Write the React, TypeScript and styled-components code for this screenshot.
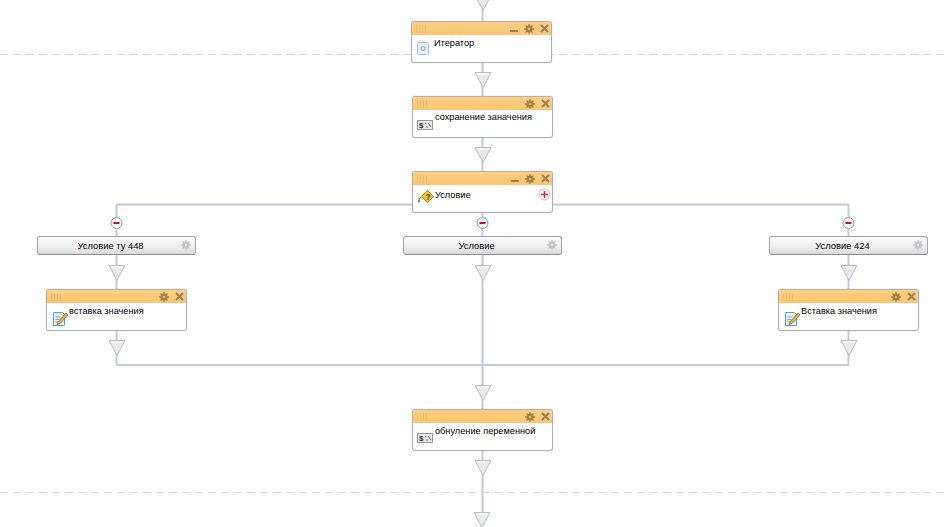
import React from "react";
import styled, { createGlobalStyle } from "styled-components";

const Global = createGlobalStyle`
  html, body { margin: 0; padding: 0; background: #fff; }
  body { font-family: "Liberation Sans", Arial, sans-serif; overflow: hidden; }
`;

const Canvas = styled.div`
  position: relative;
  width: 946px;
  height: 527px;
  overflow: hidden;
  background: #fff;
`;

const Wires = styled.svg`
  position: absolute;
  left: 0;
  top: 0;
`;

const Card = styled.div<{ $x: number; $y: number }>`
  position: absolute;
  left: ${(p) => p.$x}px;
  top: ${(p) => p.$y}px;
  width: 141px;
  height: 42px;
  box-sizing: border-box;
  border: 1px solid #adb1b5;
  border-radius: 3px;
  background: #fff;
  box-shadow: 0 0 1px #b4b7ba;
  display: flex;
  flex-direction: column;
  overflow: hidden;
`;

const CardHeader = styled.div`
  height: 13px;
  flex: none;
  background: linear-gradient(#fccf85, #fdc56c);
  display: flex;
  align-items: center;
  padding: 0 2px 0 4px;
  gap: 6px;
`;

const Grip = styled.div`
  width: 11px;
  height: 8px;
  margin-right: auto;
  background: repeating-linear-gradient(90deg, #ecb970 0 1px, transparent 1px 3px);
`;

const CardBody = styled.div`
  position: relative;
  flex: 1;
  display: flex;
  align-items: flex-start;
  padding-left: 4px;
`;

const IconSlot = styled.div<{ $top: number; $left: number }>`
  width: 18px;
  height: 18px;
  padding: ${(p) => p.$top}px 0 0 ${(p) => p.$left}px;
  box-sizing: border-box;
  flex: none;
  display: flex;
  align-items: flex-start;
  justify-content: flex-start;
`;

const CardLabel = styled.span<{ $top: number }>`
  font-size: 9.2px;
  line-height: 12px;
  margin-top: ${(p) => p.$top}px;
  color: #000;
  white-space: nowrap;
`;

const AddBadge = styled.svg`
  position: absolute;
  right: 1px;
  top: 3px;
`;

const Branch = styled.div<{ $x: number }>`
  position: absolute;
  left: ${(p) => p.$x}px;
  top: 236px;
  width: 159px;
  height: 19px;
  box-sizing: border-box;
  border: 1px solid #a0a4a8;
  border-bottom-color: #888c90;
  border-radius: 3px;
  background: linear-gradient(#fbfbfb, #eeeeee 55%, #d9d9d9);
  display: flex;
  align-items: center;
  justify-content: center;
  padding-right: 12px;
  font-size: 9.4px;
  color: #000;
`;

const BranchGear = styled.span`
  position: absolute;
  right: 4px;
  top: 3px;
  display: flex;
`;

const Gear = ({ color = "#a0834a", size = 10 }: { color?: string; size?: number }) => (
  <svg width={size} height={size} viewBox="0 0 10 10">
    <circle cx="5" cy="5" r="2.300" fill="none" stroke={color} strokeWidth="2.600" />
    <path d="M5 0v2M5 8v2M0 5h2M8 5h2M1.500 1.500l1.400 1.400M7.100 7.100l1.400 1.400M1.500 8.500l1.400-1.400M7.100 2.900l1.400-1.400" stroke={color} strokeWidth="1.300" />
  </svg>
);

const Minimize = () => (
  <svg width="8" height="9" viewBox="0 0 8 9">
    <rect x="0" y="6" width="8" height="2" fill="#97815a" />
  </svg>
);

const Close = () => (
  <svg width="9" height="9" viewBox="0 0 9 9">
    <path d="M1 1l7 7M8 1l-7 7" stroke="#97815a" strokeWidth="2" />
  </svg>
);

const IteratorIcon = () => (
  <svg width="12" height="13" viewBox="0 0 12 13">
    <rect x="0.500" y="0.500" width="11" height="12" rx="1" fill="#e6f0fa" stroke="#a3c3e0" />
    <circle cx="6" cy="6.500" r="2" fill="none" stroke="#7398bb" />
  </svg>
);

const ScriptIcon = () => (
  <svg width="16" height="10" viewBox="0 0 16 10">
    <rect x="0.500" y="0.500" width="15" height="9" fill="#e6e6e6" stroke="#979797" />
    <text x="2" y="8" fontSize="8" fontWeight="bold" fontFamily="Liberation Sans" fill="#333">$</text>
    <path d="M8 3l1.500 1M11 3l3 4M9 7h2" stroke="#777" fill="none" />
  </svg>
);

const ConditionIcon = () => (
  <svg width="16" height="13" viewBox="0 0 16 13">
    <path d="M9.500 0.500l6 6-6 6-6-6z" fill="#f9c72c" stroke="#a58216" />
    <text x="7.500" y="9.500" fontSize="8.500" fontWeight="bold" fontFamily="Liberation Sans" fill="#4f3b00">?</text>
    <path d="M1 12.500V10q0-2 2-3" stroke="#555" fill="none" />
    <path d="M0 11h2" stroke="#555" />
  </svg>
);

const NoteIcon = () => (
  <svg width="16" height="15" viewBox="0 0 16 15">
    <path d="M0.500 1.500h9l2 2v11h-11z" fill="#e6f3fb" stroke="#4c9ed4" />
    <path d="M2.500 6h5M2.500 8.500h4M2.500 11h5" stroke="#6aaad4" />
    <path d="M5 11l8-9 2 2-8 8.500-3 1z" fill="#e8b233" stroke="#7e6016" strokeWidth="0.700" />
  </svg>
);

type NodeSpec = {
  x: number;
  y: number;
  label: string;
  icon: React.ReactNode;
  min?: boolean;
  add?: boolean;
  iconTop: number;
  iconLeft: number;
  labelTop: number;
};

const nodes: NodeSpec[] = [
  { x: 411, y: 21, label: "Итератор", icon: <IteratorIcon />, min: true, iconTop: 7, iconLeft: 1, labelTop: 2 },
  { x: 412, y: 96, label: "сохранение заначения", icon: <ScriptIcon />, iconTop: 10, iconLeft: 0, labelTop: 1 },
  { x: 412, y: 171, label: "Условие", icon: <ConditionIcon />, min: true, add: true, iconTop: 5, iconLeft: 1, labelTop: 4 },
  { x: 46, y: 289, label: "вставка значения", icon: <NoteIcon />, iconTop: 8, iconLeft: 2, labelTop: 2 },
  { x: 778, y: 289, label: "Вставка значения", icon: <NoteIcon />, iconTop: 8, iconLeft: 2, labelTop: 2 },
  { x: 412, y: 409, label: "обнуление переменной", icon: <ScriptIcon />, iconTop: 10, iconLeft: 0, labelTop: 2 },
];

const branches = [
  { x: 37, label: "Условие ту 448" },
  { x: 403, label: "Условие" },
  { x: 769, label: "Условие 424" },
];

const arrows: [number, number][] = [
  [483, -5], [483, 72], [483, 147], [117, 265], [483, 265], [849, 265],
  [117, 340], [849, 340], [483, 385], [483, 460], [482, 512],
];

const Arrow = ({ x, y }: { x: number; y: number }) => (
  <g>
    <path d={`M${x - 8} ${y + 0.5}h16l-8 15z`} fill="#e9eaeb" stroke="#b9bcbf" />
    <path d={`M${x - 6} ${y + 2}h12`} stroke="#fff" />
  </g>
);

const Collapse = ({ x, y }: { x: number; y: number }) => (
  <g>
    <circle cx={x} cy={y} r="5.500" fill="#f2f4f7" stroke="#8fa0bb" />
    <rect x={x - 3} y={y - 1} width="6" height="2" fill="#c8102e" />
  </g>
);

export default function App() {
  return (
    <Canvas>
      <Global />
      <Wires width="946" height="527">
        <path d="M0 54.500H946M0 492.500H946" stroke="#dadada" strokeDasharray="8 5" />
        <path
          d="M482.500 0V512M117 204.500H849M116.500 204V365M848.500 204V365M117 365H849"
          fill="none"
          stroke="#bfcbdb"
          strokeWidth="2"
        />
        {arrows.map(([x, y], i) => (
          <Arrow key={i} x={x} y={y} />
        ))}
        <Collapse x={116.5} y={223} />
        <Collapse x={482.5} y={223} />
        <Collapse x={848.5} y={223} />
      </Wires>
      {nodes.map((n) => (
        <Card key={n.label} $x={n.x} $y={n.y}>
          <CardHeader>
            <Grip />
            {n.min && <Minimize />}
            <Gear />
            <Close />
          </CardHeader>
          <CardBody>
            <IconSlot $top={n.iconTop} $left={n.iconLeft}>{n.icon}</IconSlot>
            <CardLabel $top={n.labelTop}>{n.label}</CardLabel>
            {n.add && (
              <AddBadge width="13" height="13" viewBox="0 0 13 13">
                <circle cx="6.500" cy="6.500" r="5.500" fill="#f4f4f4" stroke="#c4c4c4" />
                <path d="M3 6.500h7M6.500 3v7" stroke="#c8304a" strokeWidth="1.500" />
              </AddBadge>
            )}
          </CardBody>
        </Card>
      ))}
      {branches.map((b) => (
        <Branch key={b.x} $x={b.x}>
          {b.label}
          <BranchGear>
            <Gear color="#c4c4c4" />
          </BranchGear>
        </Branch>
      ))}
    </Canvas>
  );
}
